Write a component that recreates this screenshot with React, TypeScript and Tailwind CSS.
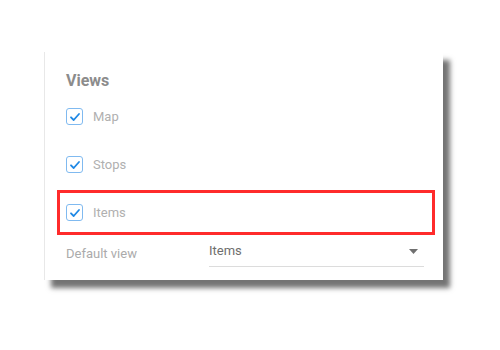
import React from 'react';

interface ViewRowProps {
  label: string;
  highlighted?: boolean;
}

function CheckIcon() {
  return (
    <span className="flex h-[17px] w-[17px] shrink-0 items-center justify-center rounded-[3px] border-[1.5px] border-[#80baf0] bg-white">
      <svg width="12" height="12" viewBox="0 0 12 12" fill="none">
        <path
          d="M2 6.3 L4.7 9 L10 3"
          stroke="#1e88e5"
          strokeWidth="1.8"
          strokeLinecap="round"
          strokeLinejoin="round"
        />
      </svg>
    </span>
  );
}

function ViewRow({ label, highlighted }: ViewRowProps) {
  return (
    <div
      className={`mt-[3px] ml-[12px] flex h-[45px] w-[378px] items-center border-[3px] pl-[6px] ${
        highlighted ? 'border-[#ff2b2b]' : 'border-transparent'
      }`}
    >
      <CheckIcon />
      <span className="ml-[10px] text-[13px] text-[#b0b0b0]">{label}</span>
    </div>
  );
}

function App() {
  return (
    <div
      className="h-[350px] w-[500px] bg-white pt-[52px] pl-[44px]"
      style={{ fontFamily: 'Roboto, "Liberation Sans", sans-serif' }}
    >
      <div className="h-[228px] w-[399px] border-l border-[#e8e8e8] bg-white shadow-[7px_8px_5px_rgba(0,0,0,0.55)]">
        <div className="pt-[19px] pl-[21px] text-[16px] leading-[20px] font-bold text-[#8c8c8c]">
          Views
        </div>
        <ViewRow label="Map" />
        <ViewRow label="Stops" />
        <ViewRow label="Items" highlighted />
        <div className="-mt-[1px] flex items-start pl-[21px]">
          <span className="mt-[12px] w-[143px] text-[13px] leading-[16px] text-[#ababab]">
            Default view
          </span>
          <div className="flex h-[33px] w-[215px] items-center justify-between border-b border-[#dcdcdc] pt-[2px]">
            <span className="text-[13px] text-[#6e6e6e]">Items</span>
            <svg width="9" height="5" viewBox="0 0 9 5" className="mr-[6px]">
              <path d="M0 0 L9 0 L4.5 5 Z" fill="#707070" />
            </svg>
          </div>
        </div>
      </div>
    </div>
  );
}

export default App;
